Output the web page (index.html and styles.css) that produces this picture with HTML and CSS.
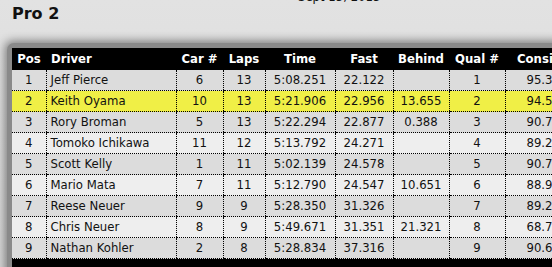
FILE: index.html
```html
<!DOCTYPE html>
<html>
<head>
<meta charset="utf-8">
<link rel="stylesheet" href="styles.css">
</head>
<body>
<div class="page">
  <div class="date">Sept 15, 2015</div>
  <h2 class="title">Pro 2</h2>
  <div class="panel">
    <table class="results">
      <colgroup>
        <col class="c-pos"><col class="c-driver"><col class="c-car"><col class="c-laps"><col class="c-time"><col class="c-fast"><col class="c-behind"><col class="c-qual"><col class="c-cons">
      </colgroup>
      <thead>
        <tr><th>Pos</th><th class="left">Driver</th><th>Car #</th><th>Laps</th><th>Time</th><th>Fast</th><th>Behind</th><th>Qual #</th><th class="cons">Consistency</th></tr>
      </thead>
      <tbody>
        <tr class="odd"><td>1</td><td class="left">Jeff Pierce</td><td>6</td><td>13</td><td>5:08.251</td><td>22.122</td><td></td><td>1</td><td class="cons">95.38%</td></tr>
        <tr class="hl"><td>2</td><td class="left">Keith Oyama</td><td>10</td><td>13</td><td>5:21.906</td><td>22.956</td><td>13.655</td><td>2</td><td class="cons">94.52%</td></tr>
        <tr class="odd"><td>3</td><td class="left">Rory Broman</td><td>5</td><td>13</td><td>5:22.294</td><td>22.877</td><td>0.388</td><td>3</td><td class="cons">90.71%</td></tr>
        <tr class="even"><td>4</td><td class="left">Tomoko Ichikawa</td><td>11</td><td>12</td><td>5:13.792</td><td>24.271</td><td></td><td>4</td><td class="cons">89.24%</td></tr>
        <tr class="odd"><td>5</td><td class="left">Scott Kelly</td><td>1</td><td>11</td><td>5:02.139</td><td>24.578</td><td></td><td>5</td><td class="cons">90.77%</td></tr>
        <tr class="even"><td>6</td><td class="left">Mario Mata</td><td>7</td><td>11</td><td>5:12.790</td><td>24.547</td><td>10.651</td><td>6</td><td class="cons">88.93%</td></tr>
        <tr class="odd"><td>7</td><td class="left">Reese Neuer</td><td>9</td><td>9</td><td>5:28.350</td><td>31.326</td><td></td><td>7</td><td class="cons">89.21%</td></tr>
        <tr class="even"><td>8</td><td class="left">Chris Neuer</td><td>8</td><td>9</td><td>5:49.671</td><td>31.351</td><td>21.321</td><td>8</td><td class="cons">68.74%</td></tr>
        <tr class="odd"><td>9</td><td class="left">Nathan Kohler</td><td>2</td><td>8</td><td>5:28.834</td><td>37.316</td><td></td><td>9</td><td class="cons">90.62%</td></tr>
      </tbody>
    </table>
    <div class="subhead">Top Qualifiers</div>
  </div>
</div>
</body>
</html>
```
FILE: styles.css
```css
html, body {
  margin: 0;
  padding: 0;
}
body {
  background: linear-gradient(#e2e2e2, #d8d8d8);
  font-family: "DejaVu Sans", Verdana, sans-serif;
  color: #111;
  overflow: hidden;
  width: 552px;
  height: 267px;
}
.page {
  padding: 0 0 0 7px;
}
.date {
  margin-top: -9px;
  margin-left: 291px;
  font-size: 11.7px;
  line-height: 13px;
  color: #111;
}
.title {
  margin: 0 0 0 5px;
  font-size: 16px;
  line-height: 20px;
  font-weight: bold;
  color: #111;
}
.panel {
  margin-top: 19px;
  width: 600px;
  border: 5px solid #8a8a8a;
  border-right: none;
  border-bottom: none;
  border-radius: 7px 0 0 0;
  box-shadow: -2px -2px 10px rgba(0, 0, 0, 0.45);
  background: #000;
}
.results {
  border-collapse: collapse;
  table-layout: fixed;
  width: 594px;
  font-size: 11.7px;
}
.c-pos { width: 34px; }
.c-driver { width: 130px; }
.c-car { width: 47px; }
.c-laps { width: 42px; }
.c-time { width: 70px; }
.c-fast { width: 58px; }
.c-behind { width: 56px; }
.c-qual { width: 56px; }
.c-cons { width: 101px; }
.results th {
  background: #000;
  color: #fff;
  font-weight: bold;
  height: 22px;
  padding: 0;
  text-align: center;
  white-space: nowrap;
  overflow: hidden;
}
.results th.left {
  text-align: left;
  padding-left: 5px;
}
.results th.cons {
  text-align: left;
  padding-left: 12px;
}
.results td {
  height: 20px;
  padding: 0;
  text-align: center;
  border-left: 1px dotted #000;
  border-bottom: 1px dotted #000;
  white-space: nowrap;
  color: #111;
}
.results td:first-child {
  border-left: none;
}
.results td.left {
  text-align: left;
  padding-left: 4px;
}
.results td.cons {
  text-align: left;
  padding-left: 21px;
}
.odd td { background: #dcdcdc; }
.even td { background: #eeeeee; }
.hl td { background: #f0ef46; }
.subhead {
  background: #000;
  color: #fff;
  font-size: 11.7px;
  font-weight: bold;
  padding: 7px 0 6px 5px;
}
```
